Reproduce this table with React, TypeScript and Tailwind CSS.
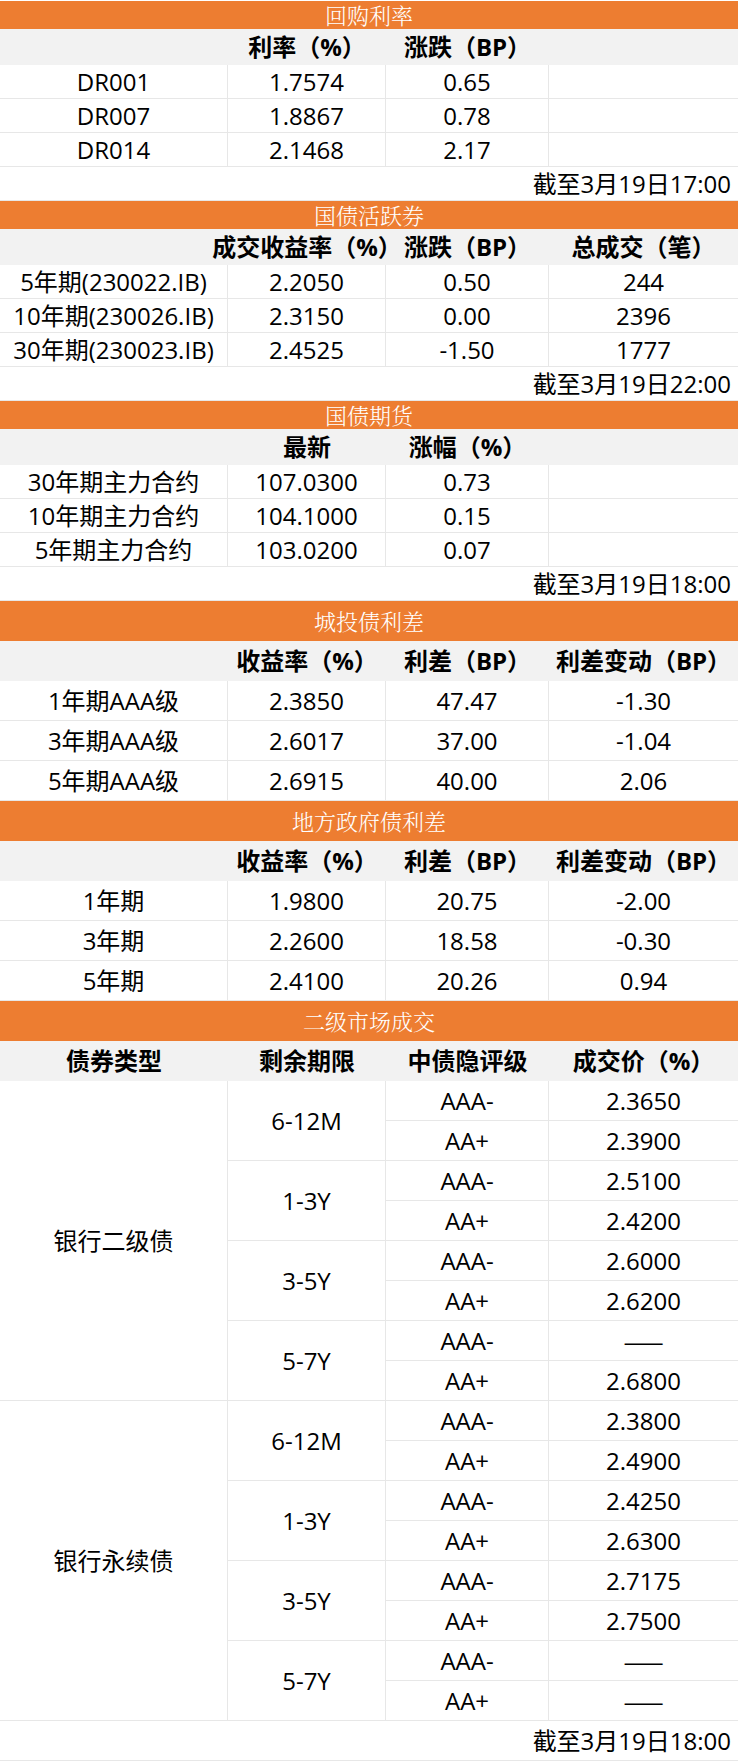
const line = "border-[#e7e7e7]";

type Simple = {
  title: string;
  heads: string[];
  rows: string[][];
  footer?: string;
  tall?: boolean;
};

const simpleTables: Simple[] = [
  {
    title: "回购利率",
    heads: ["", "利率（%）", "涨跌（BP）", ""],
    rows: [
      ["DR001", "1.7574", "0.65", ""],
      ["DR007", "1.8867", "0.78", ""],
      ["DR014", "2.1468", "2.17", ""],
    ],
    footer: "截至3月19日17:00",
  },
  {
    title: "国债活跃券",
    heads: ["", "成交收益率（%）", "涨跌（BP）", "总成交（笔）"],
    rows: [
      ["5年期(230022.IB)", "2.2050", "0.50", "244"],
      ["10年期(230026.IB)", "2.3150", "0.00", "2396"],
      ["30年期(230023.IB)", "2.4525", "-1.50", "1777"],
    ],
    footer: "截至3月19日22:00",
  },
  {
    title: "国债期货",
    heads: ["", "最新", "涨幅（%）", ""],
    rows: [
      ["30年期主力合约", "107.0300", "0.73", ""],
      ["10年期主力合约", "104.1000", "0.15", ""],
      ["5年期主力合约", "103.0200", "0.07", ""],
    ],
    footer: "截至3月19日18:00",
  },
  {
    title: "城投债利差",
    heads: ["", "收益率（%）", "利差（BP）", "利差变动（BP）"],
    rows: [
      ["1年期AAA级", "2.3850", "47.47", "-1.30"],
      ["3年期AAA级", "2.6017", "37.00", "-1.04"],
      ["5年期AAA级", "2.6915", "40.00", "2.06"],
    ],
    tall: true,
  },
  {
    title: "地方政府债利差",
    heads: ["", "收益率（%）", "利差（BP）", "利差变动（BP）"],
    rows: [
      ["1年期", "1.9800", "20.75", "-2.00"],
      ["3年期", "2.2600", "18.58", "-0.30"],
      ["5年期", "2.4100", "20.26", "0.94"],
    ],
    tall: true,
  },
];

const secondary = [
  {
    type: "银行二级债",
    groups: [
      { term: "6-12M", rows: [["AAA-", "2.3650"], ["AA+", "2.3900"]] },
      { term: "1-3Y", rows: [["AAA-", "2.5100"], ["AA+", "2.4200"]] },
      { term: "3-5Y", rows: [["AAA-", "2.6000"], ["AA+", "2.6200"]] },
      { term: "5-7Y", rows: [["AAA-", "——"], ["AA+", "2.6800"]] },
    ],
  },
  {
    type: "银行永续债",
    groups: [
      { term: "6-12M", rows: [["AAA-", "2.3800"], ["AA+", "2.4900"]] },
      { term: "1-3Y", rows: [["AAA-", "2.4250"], ["AA+", "2.6300"]] },
      { term: "3-5Y", rows: [["AAA-", "2.7175"], ["AA+", "2.7500"]] },
      { term: "5-7Y", rows: [["AAA-", "——"], ["AA+", "——"]] },
    ],
  },
];

const widths = ["w-[228px]", "w-[158px]", "w-[163px]", "w-[189px]"];

function Title({ text, tall }: { text: string; tall?: boolean }) {
  return (
    <div
      className={`flex items-center justify-center bg-[#ed7d31] text-white text-[22px] font-light leading-none font-[family-name:'Noto_Serif_CJK_SC','Noto_Sans_CJK_SC',serif] ${
        tall ? "h-[40px]" : "h-[28px]"
      }`}
    >
      {text}
    </div>
  );
}

function HeadRow({ heads, tall }: { heads: string[]; tall?: boolean }) {
  return (
    <div className={`flex bg-[#f2f2f2] font-bold ${tall ? "h-[40px]" : "h-[36px]"}`}>
      {heads.map((h, i) => (
        <div
          key={i}
          className={`${widths[i]} flex items-center justify-center whitespace-nowrap`}
        >
          {h}
        </div>
      ))}
    </div>
  );
}

function Footer({ text }: { text: string }) {
  return (
    <div className={`flex h-[34px] items-center justify-end border-b ${line} pr-[7px]`}>
      {text}
    </div>
  );
}

function SimpleTable({ t }: { t: Simple }) {
  return (
    <section>
      <Title text={t.title} tall={t.tall} />
      <HeadRow heads={t.heads} tall={t.tall} />
      {t.rows.map((r, ri) => (
        <div
          key={ri}
          className={`flex border-b ${line} ${t.tall ? "h-[40px]" : "h-[34px]"}`}
        >
          {r.map((c, ci) => (
            <div
              key={ci}
              className={`${widths[ci]} flex items-center justify-center whitespace-nowrap ${
                ci < 3 ? `border-r ${line}` : ""
              }`}
            >
              {c}
            </div>
          ))}
        </div>
      ))}
      {t.footer && <Footer text={t.footer} />}
    </section>
  );
}

function SecondaryMarket() {
  return (
    <section>
      <Title text="二级市场成交" tall />
      <HeadRow heads={["债券类型", "剩余期限", "中债隐评级", "成交价（%）"]} tall />
      {secondary.map((b) => (
        <div key={b.type} className={`flex border-b ${line}`}>
          <div className={`w-[228px] flex items-center justify-center border-r ${line}`}>
            {b.type}
          </div>
          <div className="flex flex-col">
            {b.groups.map((g, gi) => (
              <div
                key={g.term}
                className={`flex ${gi < b.groups.length - 1 ? `border-b ${line}` : ""}`}
              >
                <div className={`w-[158px] flex items-center justify-center border-r ${line}`}>
                  {g.term}
                </div>
                <div className="flex flex-col">
                  {g.rows.map((r, ri) => (
                    <div
                      key={ri}
                      className={`flex ${ri === 0 ? `h-[40px] border-b ${line}` : "h-[39px]"}`}
                    >
                      <div
                        className={`w-[163px] flex items-center justify-center border-r ${line}`}
                      >
                        {r[0]}
                      </div>
                      {r[1] === "——" ? (
                        <div className="w-[189px] flex items-center justify-center">
                          {/* the source draws the empty price as one unbroken rule */}
                          <span className="font-[family-name:'Noto_Sans_CJK_SC',sans-serif]">
                            ——
                          </span>
                        </div>
                      ) : (
                        <div className="w-[189px] flex items-center justify-center">
                          {r[1]}
                        </div>
                      )}
                    </div>
                  ))}
                </div>
              </div>
            ))}
          </div>
        </div>
      ))}
      <div className={`flex h-[40px] items-center justify-end border-b ${line} pr-[7px]`}>
        截至3月19日18:00
      </div>
    </section>
  );
}

export default function App() {
  return (
    <div className="w-[738px] bg-white pt-px text-[24px] leading-none text-black font-[family-name:'Open_Sans','Noto_Sans_CJK_SC',sans-serif]">
      {simpleTables.map((t) => (
        <SimpleTable key={t.title} t={t} />
      ))}
      <SecondaryMarket />
    </div>
  );
}
